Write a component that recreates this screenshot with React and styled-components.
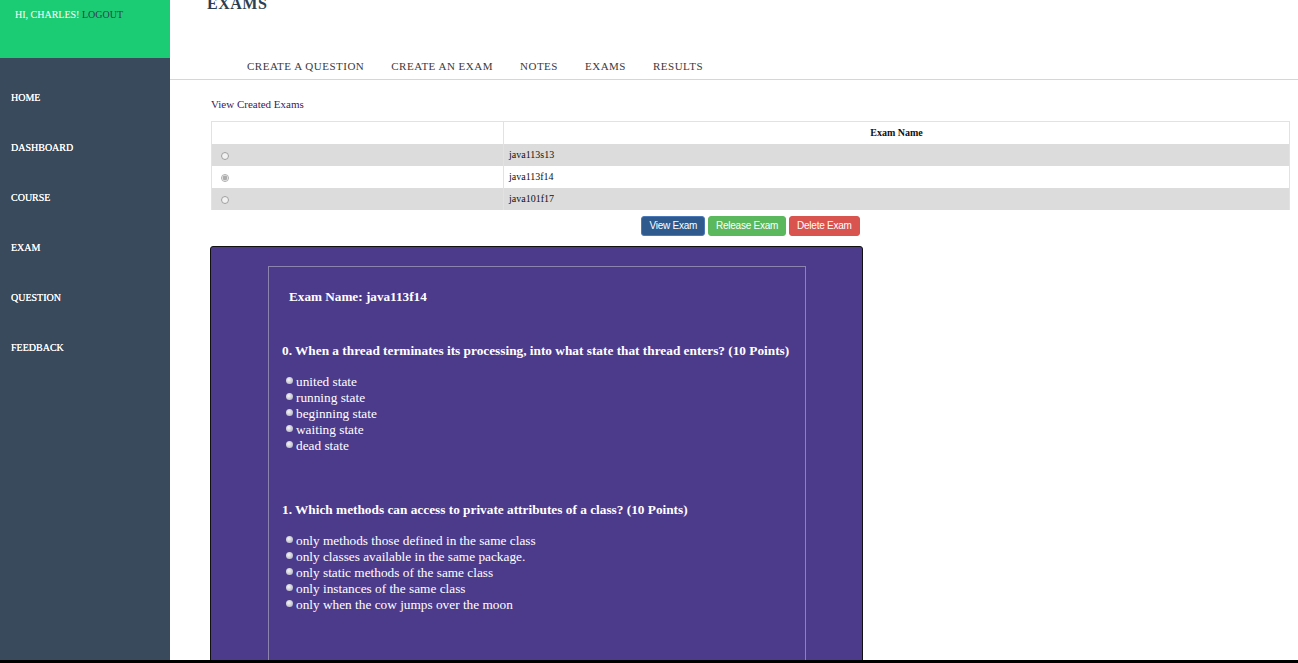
import { useState } from "react";
import styled, { createGlobalStyle } from "styled-components";

const GlobalStyles = createGlobalStyle`
  * {
    box-sizing: border-box;
    margin: 0;
    padding: 0;
  }
  html, body {
    height: 100%;
    overflow: hidden;
    font-family: "Liberation Serif", "Times New Roman", serif;
    background: #fff;
  }
`;

const Layout = styled.div`
  display: flex;
  height: 100vh;
`;

const Sidebar = styled.aside`
  width: 170px;
  flex-shrink: 0;
  background: #394a5c;
  display: flex;
  flex-direction: column;
`;

const Greeting = styled.div`
  height: 58px;
  background: #1ccc74;
  padding: 9px 0 0 15px;
  font-size: 10px;
  color: #fff;

  & a {
    color: #2d3e50;
    text-decoration: none;
  }
`;

const SideNav = styled.nav`
  display: flex;
  flex-direction: column;
  padding: 34px 0 0 11px;
  gap: 38px;

  & a {
    color: #fff;
    font-size: 10px;
    line-height: 12px;
    text-decoration: none;
    text-shadow: 0 0 0.3px #fff;
  }
`;

const Main = styled.main`
  flex: 1;
  display: flex;
  flex-direction: column;
  min-width: 0;
  overflow: hidden;

  & > * {
    flex-shrink: 0;
  }
`;

const Title = styled.h1`
  font-size: 16px;
  font-weight: bold;
  color: #2c3e50;
  letter-spacing: 0.5px;
  margin: -6px 0 0 37px;
  line-height: 20px;
`;

const TopNav = styled.nav`
  display: flex;
  gap: 27px;
  padding: 45px 0 0 77px;
  height: 66px;
  border-bottom: 1px solid #d6d6d6;

  & a {
    font-size: 11px;
    letter-spacing: 0.5px;
    color: #3a3a3a;
    text-decoration: none;
    line-height: 14px;
  }
`;

const Content = styled.section`
  padding: 17px 8px 0 40px;
  display: flex;
  flex-direction: column;
`;

const ViewLink = styled.a`
  font-size: 11px;
  color: #3c1a5b;
  text-decoration: none;
  margin-left: 1px;
  line-height: 14px;
`;

const Table = styled.table`
  margin: 10px 0 0 1px;
  width: 1079px;
  border-collapse: collapse;
  font-size: 10px;
  color: #111;

  & th, & td {
    height: 22px;
    border: 1px solid #e2e2e2;
    border-top: none;
    border-bottom: none;
    padding: 0 5px;
    text-align: left;
  }
  & thead tr {
    border-top: 1px solid #e2e2e2;
  }
  & th {
    font-weight: bold;
    text-align: center;
  }
  & th:first-child, & td:first-child {
    width: 292px;
  }
`;

const Row = styled.tr`
  background: ${(p) => (p.$striped ? "#dcdcdc" : "#fff")};
`;

const Radio = styled.input`
  width: 8px;
  height: 8px;
  margin-left: 4px;
  vertical-align: middle;
  opacity: 0.6;
  accent-color: #777;
`;

const Actions = styled.div`
  display: flex;
  justify-content: center;
  gap: 3px;
  margin: 6px 0 0 0;
  width: 1081px;
`;

const Button = styled.button`
  font-family: "Liberation Sans", Arial, sans-serif;
  font-size: 10px;
  color: #fff;
  border: 1px solid ${(p) => p.$border};
  background: ${(p) => p.$bg};
  border-radius: 3px;
  height: 20px;
  padding: 0 7px;
  letter-spacing: -0.25px;
`;

const Panel = styled.div`
  margin: 10px 0 0 0;
  width: 653px;
  min-height: 500px;
  background: #4c3a8b;
  border: 1px solid #111;
  border-radius: 3px;
  padding: 19px 0 0 57px;
`;

const Paper = styled.div`
  width: 538px;
  min-height: 460px;
  border: 1px solid #8d84ad;
  border-bottom: none;
  color: #fff;
  padding: 21px 0 0 13px;
`;

const ExamName = styled.h2`
  font-size: 13.2px;
  font-weight: bold;
  margin-left: 7px;
  line-height: 18px;
`;

const Question = styled.div`
  margin-top: ${(p) => (p.$first ? "36px" : "47px")};
`;

const QuestionText = styled.h3`
  font-size: 13.3px;
  font-weight: bold;
  line-height: 18px;
  margin-bottom: 14px;
`;

const Options = styled.ul`
  list-style: none;
  padding-left: 4px;

  & li {
    font-size: 13.3px;
    line-height: 16px;
    display: flex;
    align-items: center;
    gap: 3px;
  }
`;

const Dot = styled.span`
  width: 7px;
  height: 7px;
  border-radius: 50%;
  background: radial-gradient(circle at 40% 40%, #f4f4f8, #a8a8b8);
  margin-top: -2px;
`;

const BottomStrip = styled.div`
  position: fixed;
  left: 0;
  right: 0;
  bottom: 0;
  height: 3px;
  background: #000;
`;

const exams = ["java113s13", "java113f14", "java101f17"];

const questions = [
  {
    text: "0. When a thread terminates its processing, into what state that thread enters? (10 Points)",
    options: ["united state", "running state", "beginning state", "waiting state", "dead state"],
  },
  {
    text: "1. Which methods can access to private attributes of a class? (10 Points)",
    options: [
      "only methods those defined in the same class",
      "only classes available in the same package.",
      "only static methods of the same class",
      "only instances of the same class",
      "only when the cow jumps over the moon",
    ],
  },
];

const App = () => {
  const [selected, setSelected] = useState(1);

  return (
    <>
      <GlobalStyles />
      <Layout>
        <Sidebar>
          <Greeting>
            HI, CHARLES! <a href="#logout">LOGOUT</a>
          </Greeting>
          <SideNav>
            <a href="#home">HOME</a>
            <a href="#dashboard">DASHBOARD</a>
            <a href="#course">COURSE</a>
            <a href="#exam">EXAM</a>
            <a href="#question">QUESTION</a>
            <a href="#feedback">FEEDBACK</a>
          </SideNav>
        </Sidebar>
        <Main>
          <Title>EXAMS</Title>
          <TopNav>
            <a href="#create-question">CREATE A QUESTION</a>
            <a href="#create-exam">CREATE AN EXAM</a>
            <a href="#notes">NOTES</a>
            <a href="#exams">EXAMS</a>
            <a href="#results">RESULTS</a>
          </TopNav>
          <Content>
            <ViewLink href="#view">View Created Exams</ViewLink>
            <Table>
              <thead>
                <tr>
                  <th></th>
                  <th>Exam Name</th>
                </tr>
              </thead>
              <tbody>
                {exams.map((name, i) => (
                  <Row key={name} $striped={i % 2 === 0}>
                    <td>
                      <Radio
                        type="radio"
                        name="exam"
                        checked={selected === i}
                        onChange={() => setSelected(i)}
                      />
                    </td>
                    <td>{name}</td>
                  </Row>
                ))}
              </tbody>
            </Table>
            <Actions>
              <Button $bg="#2e5a8e" $border="#4a78b8">View Exam</Button>
              <Button $bg="#5cb85c" $border="#5cb85c">Release Exam</Button>
              <Button $bg="#d9534f" $border="#d9534f">Delete Exam</Button>
            </Actions>
            <Panel>
              <Paper>
                <ExamName>Exam Name: {exams[selected]}</ExamName>
                {questions.map((q, i) => (
                  <Question key={q.text} $first={i === 0}>
                    <QuestionText>{q.text}</QuestionText>
                    <Options>
                      {q.options.map((o) => (
                        <li key={o}>
                          <Dot />
                          {o}
                        </li>
                      ))}
                    </Options>
                  </Question>
                ))}
              </Paper>
            </Panel>
          </Content>
        </Main>
      </Layout>
      <BottomStrip />
    </>
  );
};

export default App;
